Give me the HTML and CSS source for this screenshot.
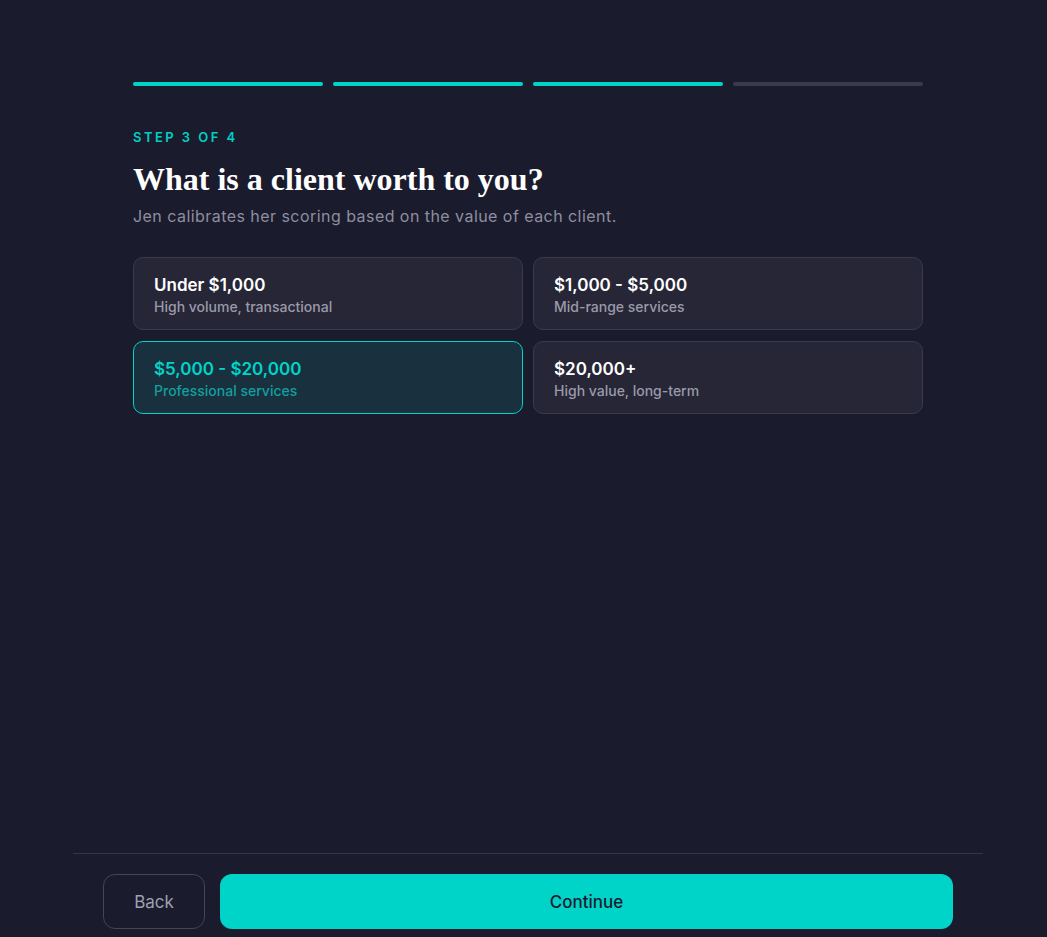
FILE: index.html
```html
<!DOCTYPE html>
<html>
<head>
<meta charset="utf-8">
<link rel="stylesheet" href="styles.css">
</head>
<body>
<div class="page">
  <main class="main">
    <div class="progress">
      <span class="seg done"></span>
      <span class="seg done"></span>
      <span class="seg done"></span>
      <span class="seg"></span>
    </div>
    <div class="step">STEP 3 OF 4</div>
    <h1 class="title">What is a client worth to you?</h1>
    <p class="subtitle">Jen calibrates her scoring based on the value of each client.</p>
    <div class="options">
      <div class="option">
        <div class="opt-title">Under $1,000</div>
        <div class="opt-sub">High volume, transactional</div>
      </div>
      <div class="option">
        <div class="opt-title">$1,000 - $5,000</div>
        <div class="opt-sub">Mid-range services</div>
      </div>
      <div class="option selected">
        <div class="opt-title">$5,000 - $20,000</div>
        <div class="opt-sub">Professional services</div>
      </div>
      <div class="option">
        <div class="opt-title">$20,000+</div>
        <div class="opt-sub">High value, long-term</div>
      </div>
    </div>
  </main>
  <footer class="footer">
    <button class="btn back">Back</button>
    <button class="btn continue">Continue</button>
  </footer>
</div>
</body>
</html>
```
FILE: styles.css
```css
* { box-sizing: border-box; }
html, body { margin: 0; padding: 0; }
body {
  background: #1b1b2e;
  font-family: "Inter", "Noto Sans", sans-serif;
  color: #fff;
}
.page {
  width: 910px;
  margin-left: 73px;
  height: 937px;
  display: flex;
  flex-direction: column;
}
.main {
  flex: 1;
  padding: 82px 60px 0;
}
.progress {
  display: flex;
  gap: 10px;
}
.seg {
  flex: 1;
  height: 4px;
  border-radius: 2px;
  background: #3a3a4a;
}
.seg.done { background: #00d4c8; }
.step {
  margin-top: 43px;
  color: #00cfc4;
  font-size: 13px;
  font-weight: 600;
  letter-spacing: 2.45px;
  line-height: 16px;
}
.title {
  margin: 16px 0 0;
  font-family: "Liberation Serif", "Times New Roman", serif;
  font-weight: 700;
  font-size: 32px;
  line-height: 36px;
  color: #fff;
}
.subtitle {
  margin: 8px 0 0;
  font-size: 16px;
  line-height: 22px;
  letter-spacing: 0.45px;
  color: #8e8e9e;
}
.options {
  margin-top: 30px;
  display: grid;
  grid-template-columns: 1fr 1fr;
  gap: 11px 10px;
}
.option {
  height: 73px;
  background: #262637;
  border: 1px solid #3a3a4c;
  border-radius: 10px;
  padding: 16px 20px 0;
}
.opt-title {
  font-size: 17px;
  font-weight: 600;
  line-height: 22px;
  color: #fff;
}
.opt-sub {
  margin-top: 2px;
  font-size: 14px;
  font-weight: 500;
  line-height: 18px;
  color: #9a9aa8;
}
.option.selected {
  background: #19303f;
  border-color: #00d4c8;
}
.option.selected .opt-title { color: #00d4c8; }
.option.selected .opt-sub { color: #149f9c; }
.footer {
  border-top: 1px solid #34344a;
  padding: 20px 30px 8px;
  display: flex;
  gap: 15px;
}
.btn {
  height: 55px;
  border-radius: 12px;
  font-family: "Inter", "Noto Sans", sans-serif;
  font-size: 17px;
  cursor: pointer;
}
.back {
  width: 102px;
  background: transparent;
  border: 1px solid #44445a;
  color: #a0a0ae;
}
.continue {
  flex: 1;
  background: #00d4c8;
  border: none;
  color: #1b1b2e;
  font-weight: 500;
}
```
